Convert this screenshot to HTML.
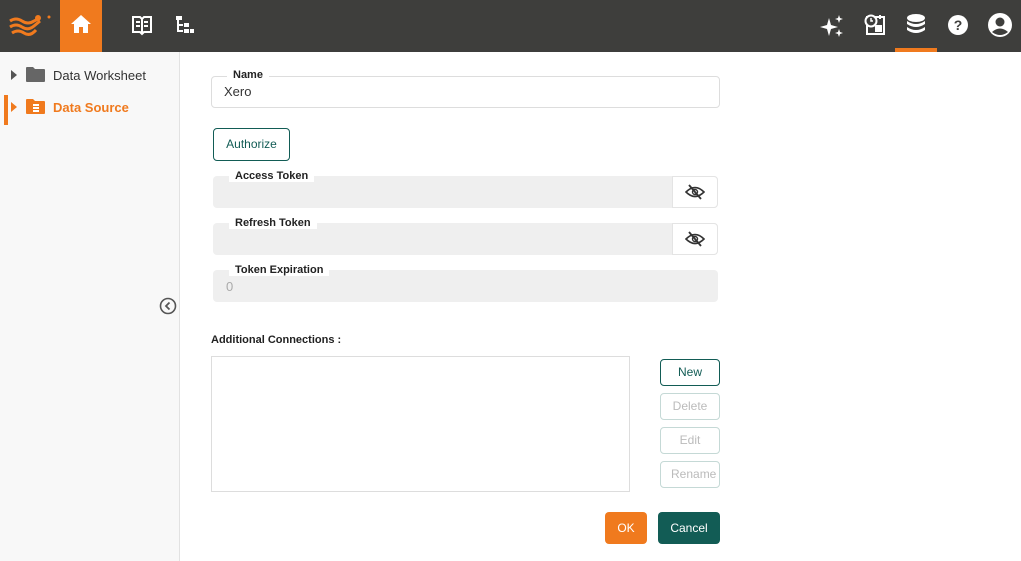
<!DOCTYPE html>
<html><head><meta charset="utf-8"><style>
*{box-sizing:border-box;margin:0;padding:0}
body{width:1021px;height:561px;overflow:hidden;font-family:"Liberation Sans",Roboto,sans-serif;background:#fff;position:relative;color:#222}
.top{position:absolute;left:0;top:0;width:1021px;height:52px;background:#3e3e3c}
.abs{position:absolute}
.side{position:absolute;left:0;top:52px;width:180px;height:509px;background:#f8f8f8;border-right:1px solid #e2e2e2}
.fld{position:absolute;border-radius:4px}
.lbl{position:absolute;font-size:11px;font-weight:bold;background:#fff;padding:0 6px;color:#222;line-height:12px}
.btn{position:absolute;border-radius:4px;font-size:12px;text-align:center}
</style></head><body>
<div class="top">
 <svg class="abs" style="left:8px;top:13px" width="46" height="24" viewBox="0 0 46 24">
  <path d="M2 8 Q8 4 14 8 T26 8 L30 6" stroke="#f07a1e" stroke-width="3" fill="none"/>
  <path d="M2 14 Q8 10 14 14 T26 13 L32 8" stroke="#f07a1e" stroke-width="3" fill="none"/>
  <path d="M4 20 Q10 16 16 20 T28 17" stroke="#f07a1e" stroke-width="3" fill="none"/>
  <circle cx="30" cy="5" r="3" fill="#f07a1e"/><circle cx="41" cy="4" r="1.5" fill="#f07a1e"/>
 </svg>
 <div class="abs" style="left:60px;top:0;width:42px;height:52px;background:#f07a1e"></div>
 <svg class="abs" style="left:70px;top:14px" width="22" height="20" viewBox="0 0 22 20"><path d="M11 1 L21 10 H18 V19 H13 V13 H9 V19 H4 V10 H1 Z" fill="#fff"/></svg>
 <svg class="abs" style="left:131px;top:14px" width="22" height="22" viewBox="0 0 22 22"><path d="M2 3 H9 L11 5 L13 3 H20 V18 H13 L11 20 L9 18 H2 Z" stroke="#fff" stroke-width="2" fill="none"/><path d="M11 5 V19 M5 8 H9 M5 12 H9 M13 8 H17 M13 12 H17" stroke="#fff" stroke-width="2"/></svg>
 <svg class="abs" style="left:175px;top:15px" width="20" height="20" viewBox="0 0 20 20"><rect x="1" y="1" width="6" height="4" fill="#fff"/><path d="M3 5 V16 H8 M3 10 H8" stroke="#fff" stroke-width="2" fill="none"/><rect x="9" y="8" width="5" height="4" fill="#fff"/><rect x="9" y="14" width="5" height="4" fill="#fff"/><rect x="15" y="14" width="4" height="4" fill="#fff"/></svg>
 <svg class="abs" style="left:820px;top:14px" width="24" height="24" viewBox="0 0 24 24"><path d="M9 4 L11 11 L18 13 L11 15 L9 22 L7 15 L0 13 L7 11 Z" fill="#fff"/><path d="M19 1 L20 4 L23 5 L20 6 L19 9 L18 6 L15 5 L18 4 Z" fill="#fff"/><path d="M19 15 L20 18 L23 19 L20 20 L19 23 L18 20 L15 19 L18 18 Z" fill="#fff"/></svg>
 <svg class="abs" style="left:864px;top:14px" width="22" height="22" viewBox="0 0 22 22"><rect x="3" y="3" width="17" height="17" stroke="#fff" stroke-width="2" fill="none"/><circle cx="7" cy="7" r="5.5" fill="#3e3e3c" stroke="#fff" stroke-width="2"/><path d="M7 4 V7 H9" stroke="#fff" stroke-width="1.5" fill="none"/><rect x="11" y="11" width="7" height="7" fill="#fff"/><rect x="15" y="1" width="2" height="4" fill="#fff"/></svg>
 <svg class="abs" style="left:905px;top:13px" width="22" height="22" viewBox="0 0 22 22"><ellipse cx="11" cy="5" rx="9" ry="4" fill="#fff"/><path d="M2 8 Q11 14 20 8 V11 Q11 17 2 11 Z" fill="#fff"/><path d="M2 14 Q11 20 20 14 V17 Q11 23 2 17 Z" fill="#fff"/></svg>
 <div class="abs" style="left:895px;top:48px;width:42px;height:4px;background:#f07a1e"></div>
 <svg class="abs" style="left:947px;top:14px" width="22" height="22" viewBox="0 0 22 22"><circle cx="11" cy="11" r="10" fill="#fff"/><text x="11" y="16" text-anchor="middle" font-size="14" font-weight="bold" fill="#3e3e3c" font-family="Liberation Sans">?</text></svg>
 <svg class="abs" style="left:987px;top:12px" width="26" height="26" viewBox="0 0 26 26"><circle cx="13" cy="13" r="12" fill="#fff"/><circle cx="13" cy="10" r="4.5" fill="#3e3e3c"/><path d="M5 20 Q13 13 21 20 Q13 26 5 20Z" fill="#3e3e3c"/></svg>
</div>
<div class="side">
 <svg class="abs" style="left:10px;top:18px" width="8" height="10"><path d="M1 0 L7 5 L1 10Z" fill="#555"/></svg>
 <svg class="abs" style="left:26px;top:15px" width="19" height="15"><path d="M0 1 Q0 0 1 0 H7 L9 2 H18 Q19 2 19 3 V14 Q19 15 18 15 H1 Q0 15 0 14Z" fill="#666"/></svg>
 <div class="abs" style="left:53px;top:16px;font-size:13px;color:#333">Data Worksheet</div>
 <div class="abs" style="left:4px;top:43px;width:4px;height:30px;background:#f07a1e"></div>
 <svg class="abs" style="left:10px;top:50px" width="8" height="10"><path d="M1 0 L7 5 L1 10Z" fill="#f07a1e"/></svg>
 <svg class="abs" style="left:26px;top:47px" width="19" height="15"><path d="M0 1 Q0 0 1 0 H7 L9 2 H18 Q19 2 19 3 V14 Q19 15 18 15 H1 Q0 15 0 14Z" fill="#f07a1e"/><rect x="7" y="5" width="6" height="2" fill="#fff"/><rect x="7" y="8" width="6" height="2" fill="#fff"/><rect x="7" y="11" width="6" height="2" fill="#fff"/></svg>
 <div class="abs" style="left:53px;top:48px;font-size:13px;color:#f07a1e;font-weight:bold">Data Source</div>
 <svg class="abs" style="left:159px;top:245px" width="18" height="18"><circle cx="9" cy="9" r="7.5" stroke="#555" stroke-width="1.6" fill="none"/><path d="M10.5 5.5 L7 9 L10.5 12.5" stroke="#555" stroke-width="1.8" fill="none"/></svg>
</div>

<div class="fld" style="left:211px;top:76px;width:509px;height:32px;border:1px solid #ddd"></div>
<div class="lbl" style="left:227px;top:69px">Name</div>
<div class="abs" style="left:224px;top:84px;font-size:13px;color:#333">Xero</div>

<div class="btn" style="left:213px;top:128px;width:77px;height:33px;border:1px solid #125c55;line-height:31px;color:#125c55">Authorize</div>

<div class="fld" style="left:213px;top:176px;width:505px;height:32px;background:#efefef"></div>
<div class="abs" style="left:672px;top:176px;width:46px;height:32px;background:#fff;border:1px solid #e4e4e4;border-radius:0 4px 4px 0"></div>
<div class="lbl" style="left:229px;top:170px">Access Token</div>
<div class="fld" style="left:213px;top:223px;width:505px;height:32px;background:#efefef"></div>
<div class="abs" style="left:672px;top:223px;width:46px;height:32px;background:#fff;border:1px solid #e4e4e4;border-radius:0 4px 4px 0"></div>
<div class="lbl" style="left:229px;top:217px">Refresh Token</div>
<svg class="abs" style="left:685px;top:184px" width="20" height="16" viewBox="0 0 20 16"><path d="M1 8 Q10 -1 19 8 Q10 17 1 8Z" stroke="#333" stroke-width="1.6" fill="none"/><circle cx="10" cy="8" r="2.5" stroke="#333" stroke-width="1.4" fill="none"/><path d="M4 1 L16 15" stroke="#333" stroke-width="1.8"/></svg>
<svg class="abs" style="left:685px;top:231px" width="20" height="16" viewBox="0 0 20 16"><path d="M1 8 Q10 -1 19 8 Q10 17 1 8Z" stroke="#333" stroke-width="1.6" fill="none"/><circle cx="10" cy="8" r="2.5" stroke="#333" stroke-width="1.4" fill="none"/><path d="M4 1 L16 15" stroke="#333" stroke-width="1.8"/></svg>
<div class="fld" style="left:213px;top:270px;width:505px;height:32px;background:#efefef"></div>
<div class="lbl" style="left:229px;top:264px">Token Expiration</div>
<div class="abs" style="left:226px;top:279px;font-size:13px;color:#aaa">0</div>

<div class="abs" style="left:211px;top:334px;font-size:11px;font-weight:bold">Additional Connections :</div>
<div class="abs" style="left:211px;top:356px;width:419px;height:136px;border:1px solid #ddd"></div>
<div class="btn" style="left:660px;top:359px;width:60px;height:27px;border:1px solid #125c55;line-height:25px;color:#125c55">New</div>
<div class="btn" style="left:660px;top:393px;width:60px;height:27px;border:1px solid #c5d9d6;line-height:25px;color:#bbb">Delete</div>
<div class="btn" style="left:660px;top:427px;width:60px;height:27px;border:1px solid #c5d9d6;line-height:25px;color:#bbb">Edit</div>
<div class="btn" style="left:660px;top:461px;width:60px;height:27px;border:1px solid #c5d9d6;line-height:25px;color:#bbb;overflow:hidden;padding-left:10px;text-align:left">Rename</div>
<div class="btn" style="left:605px;top:512px;width:42px;height:32px;background:#f07a1e;color:#fff;line-height:32px">OK</div>
<div class="btn" style="left:658px;top:512px;width:62px;height:32px;background:#125c55;color:#fff;line-height:32px">Cancel</div>
</body></html>
